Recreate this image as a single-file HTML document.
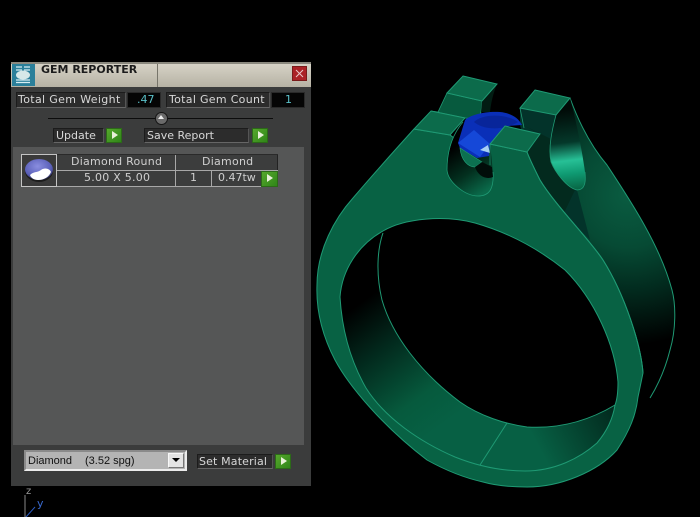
<!DOCTYPE html>
<html><head><meta charset="utf-8">
<style>
html,body{margin:0;padding:0;background:#000;width:700px;height:517px;overflow:hidden}
.a{position:absolute;box-sizing:border-box}
.t{position:absolute;font:11px/16px "DejaVu Sans",sans-serif;color:#d8d8d8;white-space:pre}
.b{position:absolute;box-sizing:border-box;background:#2c2c2c;border:1px solid #1c1c1c;border-right-color:#555;border-bottom-color:#666}
.g{position:absolute;box-sizing:border-box;width:16px;height:15px;background:linear-gradient(135deg,#56a82c,#2f8518);border:1px solid #2c6a18}
.g:after{content:"";position:absolute;left:5px;top:2px;border-left:6px solid #e8f0d8;border-top:4.5px solid transparent;border-bottom:4.5px solid transparent}
.l{position:absolute;background:#a8a8a8}
</style></head><body>
<svg class="a" style="left:0;top:0" width="700" height="517" viewBox="0 0 700 517">
<defs>
<radialGradient id="bk" gradientUnits="userSpaceOnUse" cx="628" cy="195" r="150"><stop offset="0" stop-color="#0a5c41"/><stop offset=".35" stop-color="#064a34"/><stop offset=".65" stop-color="#02291d"/><stop offset="1" stop-color="#000"/></radialGradient>
<linearGradient id="inn" gradientUnits="userSpaceOnUse" x1="358" y1="305" x2="445" y2="425"><stop offset="0" stop-color="#000"/><stop offset=".3" stop-color="#02251a"/><stop offset=".75" stop-color="#065a3d"/><stop offset="1" stop-color="#076044"/></linearGradient>
<linearGradient id="inn2" gradientUnits="userSpaceOnUse" x1="540" y1="450" x2="615" y2="410"><stop offset="0" stop-color="#076044"/><stop offset="1" stop-color="#02291d"/></linearGradient>
<linearGradient id="sl" gradientUnits="userSpaceOnUse" x1="560" y1="110" x2="570" y2="192"><stop offset="0" stop-color="#010a07"/><stop offset=".4" stop-color="#04382a"/><stop offset=".62" stop-color="#27c096"/><stop offset=".78" stop-color="#0f9a72"/><stop offset="1" stop-color="#07603f"/></linearGradient>
<linearGradient id="sl2" gradientUnits="userSpaceOnUse" x1="450" y1="150" x2="480" y2="195"><stop offset="0" stop-color="#000"/><stop offset=".55" stop-color="#03301f"/><stop offset="1" stop-color="#0a6a4a"/></linearGradient>
<radialGradient id="ic" cx=".45" cy=".35" r=".7"><stop offset="0" stop-color="#8a8ee0"/><stop offset=".7" stop-color="#5a5fb8"/><stop offset="1" stop-color="#2a2a50"/></radialGradient>
</defs>
<!-- back band side -->
<path d="M556 115 L570 98 C578 120 590 145 607 165 C630 200 660 245 672 290 C676 305 676 330 670 350 C665 370 658 385 650 398 L640 400 L603 260 L540 180 L527 152 L540 134 Z" fill="url(#bk)"/>
<path d="M570 98 C578 120 590 145 607 165 C630 200 660 245 672 290 C676 305 676 330 670 350 C665 370 658 385 650 398" fill="none" stroke="#1f9a74" stroke-width="1"/>
<!-- dark side below right prong -->
<path d="M520 108 L556 115 C552 130 548 148 551 162 C555 172 567 188 577 190 L590 240 L577 227 C565 212 550 197 540 180 L527 152 L520 125 Z" fill="#03332a"/>
<path d="M523 125 L540 134 L527 152 L540 180 L563 215 L575 190 L551 162 L553 140 Z" fill="#032a1e"/>
<!-- main body -->
<path d="M414 129 C395 150 370 178 353 198 C335 218 317 250 317 285 C316 310 322 335 335 360 C350 388 385 428 427 460 C445 470 465 478 483 482 C497 486 512 487 527 487 C560 487 597 472 617 450 C630 430 636 415 638 397 L643 373 C641 345 625 295 603 260 C590 240 555 205 540 180 C535 170 530 160 527 152 L490 144 L490 165 L450 135 Z" fill="#086244" stroke="#1f9a74" stroke-width="1"/>
<!-- inner band -->
<path d="M383 231 C377 250 376 275 382 300 C392 335 420 372 460 402 C480 416 505 424 527 427 C560 429 590 420 615 405 C613 418 608 430 597 443 C580 458 555 471 525 471 C505 471 480 467 455 457 C420 442 385 418 366 388 C350 360 342 330 340 297 C342 270 358 245 383 231 Z" fill="url(#inn)"/>
<path d="M507 423 C530 429 590 424 615 405 C613 418 608 430 597 443 C580 458 555 471 525 471 C510 471 495 469 480 465 Z" fill="url(#inn2)"/>
<!-- hole -->
<path d="M383 231 C405 218 445 215 475 223 C510 233 540 250 565 270 C595 300 615 345 618 382 C618 392 617 400 615 405 C590 420 560 429 527 427 C505 424 480 416 460 402 C420 372 392 335 382 300 C376 275 377 250 383 231 Z" fill="#000"/>
<path d="M615 405 C617 400 618 392 618 382 C615 345 595 300 565 270 C540 250 510 233 475 223 C445 215 405 218 383 231 C358 245 342 270 340 297 C342 330 350 360 366 388 C385 418 420 442 455 457 C480 467 505 471 525 471 C555 471 580 458 597 443 C608 430 613 418 615 405" fill="none" stroke="#1f9a74" stroke-width="1"/>
<path d="M383 233 C377 250 376 275 382 300 C392 335 420 372 460 402 C480 416 505 424 527 427 C560 429 590 420 615 405" fill="none" stroke="#1f9a74" stroke-width="1"/>
<path d="M507 423 L480 465" fill="none" stroke="#1f9a74" stroke-width="1"/>
<!-- right edge line on body -->
<path d="M527 152 C530 160 535 170 540 180 C555 205 590 240 603 260 C625 295 641 345 643 373" fill="none" stroke="#1f9a74" stroke-width="1"/>
<!-- back left prong -->
<path d="M447 93 L482 101 L481 112 L478 119 L465 118 L431 111 L438 112 Z" fill="#075a3e" stroke="#1f9a74" stroke-width=".8"/>
<path d="M497 84 L482 101 L481 112 L490 112 C491 103 493 94 497 84 Z" fill="#021c13"/>
<path d="M463 76 L497 84 L482 101 L447 93 Z" fill="#0c6b4b" stroke="#1f9a74" stroke-width="1"/>
<!-- right prong & slot -->
<path d="M556 115 C552 130 548 148 551 162 C555 172 567 188 577 190 C585 190 586 182 585 172 C582 150 576 120 570 98 Z" fill="url(#sl)"/>
<path d="M556 115 C552 130 548 148 551 162 C555 172 567 188 577 190 C585 190 586 182 585 172" fill="none" stroke="#1f9a74" stroke-width=".8"/>
<path d="M535 90 L570 98 L556 115 L520 108 Z" fill="#0c6b4b" stroke="#1f9a74" stroke-width="1"/>
<path d="M520 108 L524 128" fill="none" stroke="#1f9a74" stroke-width=".8"/>
<!-- left slot -->
<path d="M465 118 C455 130 447 150 447 170 C448 182 465 196 478 196 C490 196 494 188 493 172 L490 144 L470 130 Z" fill="url(#sl2)"/>
<path d="M463 122 C452 135 447 152 447 170 C448 182 465 196 478 196 C490 196 494 188 493 172" fill="none" stroke="#1f9a74" stroke-width=".8"/>
<!-- gem -->
<path d="M465 120 C470 115 485 111 500 112 C510 113 518 117 522 125 L505 126 L490 144 L489 156 L477 158 L460 148 L458 143 Z" fill="#0a2fb8"/>
<path d="M474 122 C482 114 505 113 518 122 C505 130 485 131 474 122 Z" fill="#08259a"/>
<path d="M458 143 L474 130 L490 144 L480 157 Z" fill="#1548d8"/>
<path d="M480 150 L488 145 L490 153 Z" fill="#a8d0f4"/>
<path d="M460 148 L482 162 L475 167 C468 167 461 160 460 148 Z" fill="#0c7050" stroke="#1f9a74" stroke-width=".7"/>
<path d="M475 167 L482 162 L492 167 L493 177 C486 180 478 176 475 167 Z" fill="#010d09"/>
<!-- front prongs -->
<path d="M431 111 L465 118 L450 135 L414 129 Z" fill="#0c6b4b" stroke="#1f9a74" stroke-width="1"/>
<path d="M505 126 L540 134 L527 152 L490 144 Z" fill="#0c6b4b" stroke="#1f9a74" stroke-width="1"/>
<path d="M490 144 L490 165" fill="none" stroke="#1f9a74" stroke-width=".7"/>
<!-- axis -->
<path d="M25 495 V517" stroke="#888" fill="none"/>
<path d="M35 507 L26 517" stroke="#2a5ac0" fill="none"/>
</svg>

<div class="t" style="left:26px;top:485px;font-size:10px;line-height:14px;color:#999">z</div>
<div class="t" style="left:37px;top:497px;font-size:11px;line-height:14px;color:#3a6ad0">y</div>

<!-- window -->
<div class="a" style="left:11px;top:62px;width:300px;height:424px;background:#3b3c3c"></div>
<div class="a" style="left:11px;top:62px;width:300px;height:25px;background:linear-gradient(#d6d2c6,#b6b2a4);border-top:2px solid #8a887e"></div>
<div class="a" style="left:157px;top:64px;width:1px;height:23px;background:#77756a"></div>
<div class="a" style="left:12px;top:64px;width:23px;height:22px;background:#2a7f9a"></div>
<svg class="a" style="left:12px;top:64px" width="23" height="22"><path d="M4 3h6M12 3h6M4 6h6M12 6h6M4 16h14M4 18.500h14" stroke="#d6eef4" stroke-width="1.200" fill="none"/><ellipse cx="11" cy="11" rx="7" ry="4.500" fill="#d6e8e8"/></svg>
<div class="t" style="left:41px;top:62px;font-size:11px;font-weight:bold;color:#1c1c1c">GEM REPORTER</div>
<div class="a" style="left:292px;top:66px;width:15px;height:15px;background:#ab2226;border:1px solid #7a1a1a"></div>
<svg class="a" style="left:292px;top:66px" width="15" height="15"><path d="M4 4L11 11M11 4L4 11" stroke="#e8c8c8" fill="none"/></svg>

<!-- top fields -->
<div class="b" style="left:16px;top:92px;width:110px;height:16px"></div>
<div class="t" style="left:18px;top:92px;letter-spacing:.35px">Total Gem Weight</div>
<div class="a" style="left:127px;top:92px;width:34px;height:16px;background:#050505;border:1px solid #2a2a2a"></div>
<div class="t" style="left:137px;top:92px;color:#5ac0c8">.47</div>
<div class="b" style="left:166px;top:92px;width:104px;height:16px"></div>
<div class="t" style="left:169px;top:92px;letter-spacing:.3px">Total Gem Count</div>
<div class="a" style="left:271px;top:92px;width:34px;height:16px;background:#050505;border:1px solid #2a2a2a"></div>
<div class="t" style="left:285px;top:92px;color:#5ac0c8">1</div>

<!-- slider -->
<div class="a" style="left:48px;top:118px;width:225px;height:1px;background:#0c0c0c"></div>
<div class="a" style="left:155px;top:112px;width:13px;height:13px;border-radius:50%;background:#6a6a6a;border:1px solid #151515"></div>
<div class="a" style="left:158px;top:115px;border-bottom:4px solid #eee;border-left:3.500px solid transparent;border-right:3.500px solid transparent"></div>

<!-- buttons -->
<div class="b" style="left:53px;top:128px;width:51px;height:15px"></div>
<div class="t" style="left:56px;top:128px">Update</div>
<div class="g" style="left:106px;top:128px"></div>
<div class="b" style="left:144px;top:128px;width:105px;height:15px"></div>
<div class="t" style="left:147px;top:128px">Save Report</div>
<div class="g" style="left:252px;top:128px"></div>

<!-- inner panel -->
<div class="a" style="left:13px;top:147px;width:291px;height:298px;background:#555656"></div>

<!-- table -->
<div class="a" style="left:21px;top:154px;width:36px;height:33px;background:#3a3a3a;border:1px solid #c4c4c4"></div>
<svg class="a" style="left:22px;top:155px" width="34" height="31"><ellipse cx="17" cy="16" rx="14" ry="11" fill="#1c1c1c"/><ellipse cx="17" cy="14.500" rx="14" ry="10.500" fill="url(#ic)"/><path d="M8 20 C12 16 15 18 19 15 C23 12 28 14 29 17 C27 22 22 25 16 25 C12 25 9 23 8 20 Z" fill="#fff"/></svg>
<div class="a" style="left:57px;top:154px;width:221px;height:33px;background:#3c3d3d"></div>
<div class="l" style="left:57px;top:154px;width:221px;height:1px;background:#2a2a2a"></div>
<div class="l" style="left:57px;top:170px;width:221px;height:1px"></div>
<div class="l" style="left:57px;top:186px;width:204px;height:1px"></div>
<div class="l" style="left:175px;top:155px;width:1px;height:32px"></div>
<div class="l" style="left:211px;top:171px;width:1px;height:16px"></div>
<div class="l" style="left:277px;top:155px;width:1px;height:15px;background:#222"></div>
<div class="t" style="left:71px;top:154px;letter-spacing:.25px;color:#cfcfcf">Diamond Round</div>
<div class="t" style="left:202px;top:154px;letter-spacing:.25px;color:#cfcfcf">Diamond</div>
<div class="t" style="left:84px;top:170px;letter-spacing:.25px;color:#cfcfcf">5.00 X 5.00</div>
<div class="t" style="left:190px;top:170px;color:#cfcfcf">1</div>
<div class="t" style="left:218px;top:170px;color:#cfcfcf">0.47tw</div>
<div class="g" style="left:261px;top:171px;width:17px;height:16px"></div>

<!-- bottom -->
<div class="a" style="left:24px;top:450px;width:163px;height:21px;background:#b4b4b4;border:2px solid #ececec;border-top-color:#8a8a8a;border-left-color:#8a8a8a"></div>
<div class="t" style="left:28px;top:453px;font:11px/16px 'Liberation Sans',sans-serif;color:#111">Diamond</div>
<div class="t" style="left:85px;top:453px;font:11px/16px 'Liberation Sans',sans-serif;color:#111">(3.52 spg)</div>
<div class="a" style="left:168px;top:453px;width:16px;height:15px;background:#e4e4e4;border:1px solid #f8f8f8;border-right-color:#777;border-bottom-color:#777"></div>
<div class="a" style="left:172px;top:458px;border-top:4px solid #000;border-left:4px solid transparent;border-right:4px solid transparent"></div>
<div class="b" style="left:197px;top:454px;width:76px;height:15px"></div>
<div class="t" style="left:199px;top:454px;letter-spacing:.15px">Set Material</div>
<div class="g" style="left:275px;top:454px"></div>
</body></html>
